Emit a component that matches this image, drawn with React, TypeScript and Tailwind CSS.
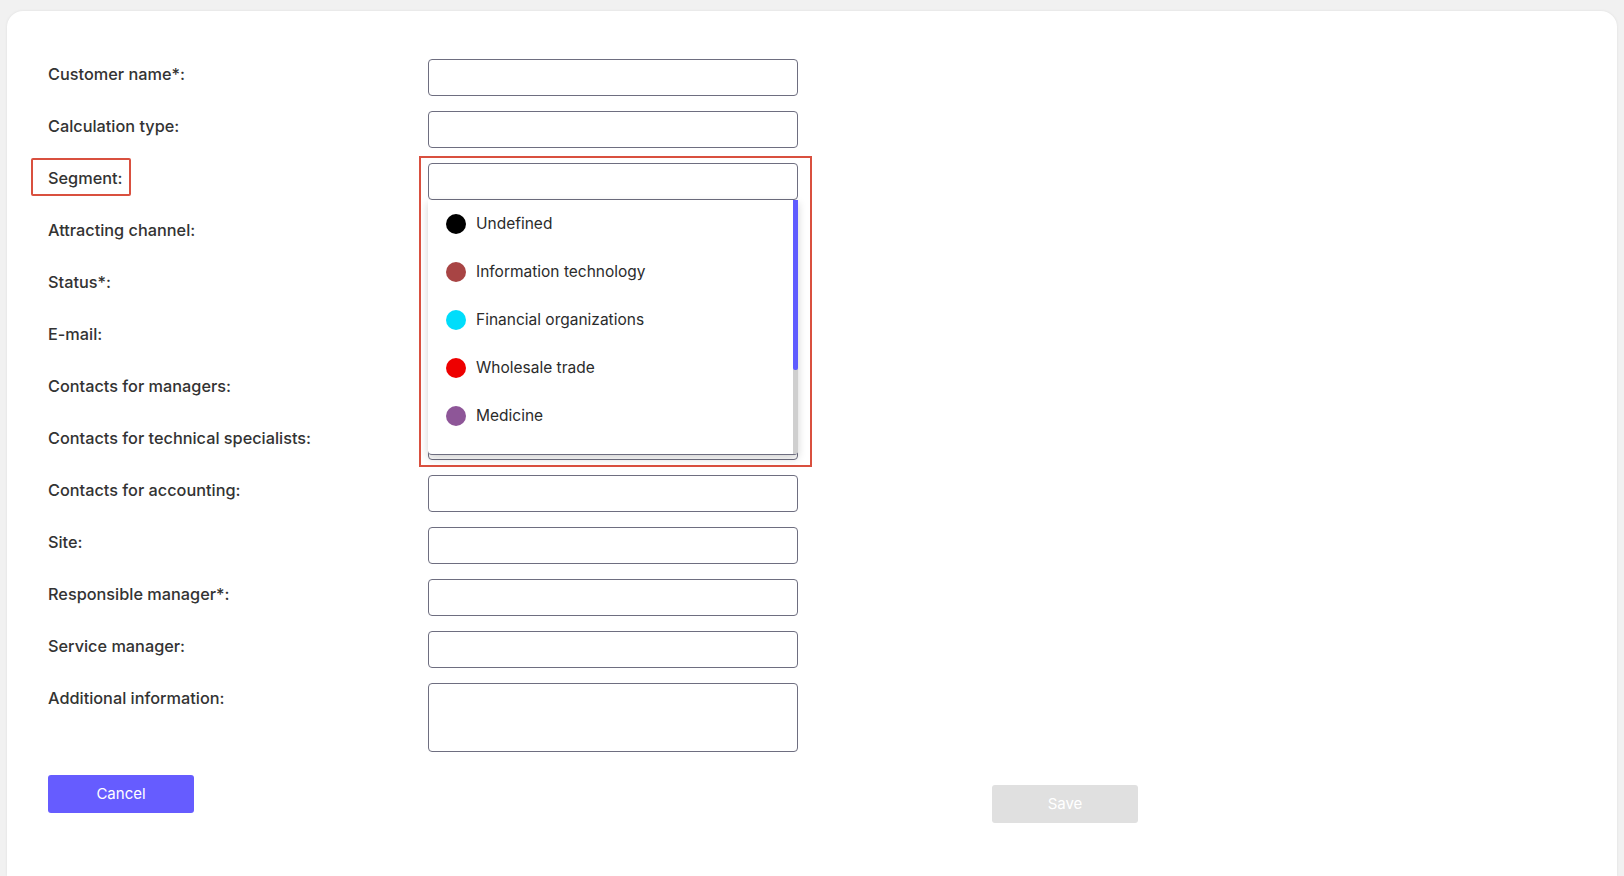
import React from "react";

type Segment = { name: string; color: string };

const fields = [
  "Customer name*:",
  "Calculation type:",
  "Segment:",
  "Attracting channel:",
  "Status*:",
  "E-mail:",
  "Contacts for managers:",
  "Contacts for technical specialists:",
  "Contacts for accounting:",
  "Site:",
  "Responsible manager*:",
  "Service manager:",
];

const segments: Segment[] = [
  { name: "Undefined", color: "#000000" },
  { name: "Information technology", color: "#a84444" },
  { name: "Financial organizations", color: "#00ddfb" },
  { name: "Wholesale trade", color: "#ee0000" },
  { name: "Medicine", color: "#8e5698" },
  { name: "Construction", color: "#f5a6e6" },
];

const SegmentDropdown = () => (
  <div className="absolute left-0 top-full z-10 flex h-[255px] w-full overflow-hidden rounded-b-[4px] border-b border-[#6e6e80] bg-white shadow-[0_3px_8px_rgba(0,0,0,0.18)]">
    <ul className="flex-1 overflow-hidden">
      {segments.map((s) => (
        <li key={s.name} className="flex h-[48px] shrink-0 items-center pl-[18px] text-[15.5px] text-[#2b2b2b]">
          <span className="mr-[10px] h-[20px] w-[20px] rounded-full" style={{ backgroundColor: s.color }} />
          {s.name}
        </li>
      ))}
    </ul>
    {/* scrollbar */}
    <div className="flex w-[5px] flex-col bg-[#cfcfcf]">
      <div className="h-[170px] rounded-b-[2px] bg-[#5f5cff]" />
    </div>
  </div>
);

export default function App() {
  return (
    <div className="min-h-screen bg-[#f1f1f1] px-[7px] pt-[11px]" style={{ fontFamily: "Inter, 'Noto Sans', sans-serif" }}>
      <div className="min-h-[865px] rounded-t-[16px] bg-white pl-[41px] pt-[48px] shadow-[0_0_3px_rgba(0,0,0,0.08)]">
        <div className="flex flex-col gap-[15px]">
          {fields.map((label, i) => (
            <div key={label} className="flex">
              <div className="w-[380px] pt-[3px] text-[16.3px] leading-[24px] font-medium text-[#333]">
                <span className="relative">
                  {label}
                  {i === 2 && (
                    <span className="absolute -left-[17px] -right-[9px] -top-[10px] -bottom-[8px] rounded-[2px] border-2 border-[#d9503f]" />
                  )}
                </span>
              </div>
              <div className="relative w-[370px]">
                <input className="block h-[37px] w-full rounded-[4px] border border-[#6e6e80] bg-white outline-none" />
                {i === 2 && (
                  <>
                    <SegmentDropdown />
                    <div className="pointer-events-none absolute -left-[9px] -top-[7px] z-20 h-[311px] w-[393px] border-2 border-[#d9503f]" />
                  </>
                )}
              </div>
            </div>
          ))}
          <div className="flex">
            <div className="w-[380px] pt-[3px] text-[16.3px] leading-[24px] font-medium text-[#333]">Additional information:</div>
            <textarea className="block h-[69px] w-[370px] resize-none rounded-[4px] border border-[#6e6e80] bg-white outline-none" />
          </div>
        </div>

        <div className="mt-[23px] flex items-start">
          <button className="h-[38px] w-[146px] rounded-[3px] bg-[#665cff] text-[15px] text-white">Cancel</button>
          <button className="ml-[798px] mt-[10px] h-[38px] w-[146px] rounded-[3px] bg-[#e0e0e0] text-[15px] text-white">Save</button>
        </div>
      </div>
    </div>
  );
}
